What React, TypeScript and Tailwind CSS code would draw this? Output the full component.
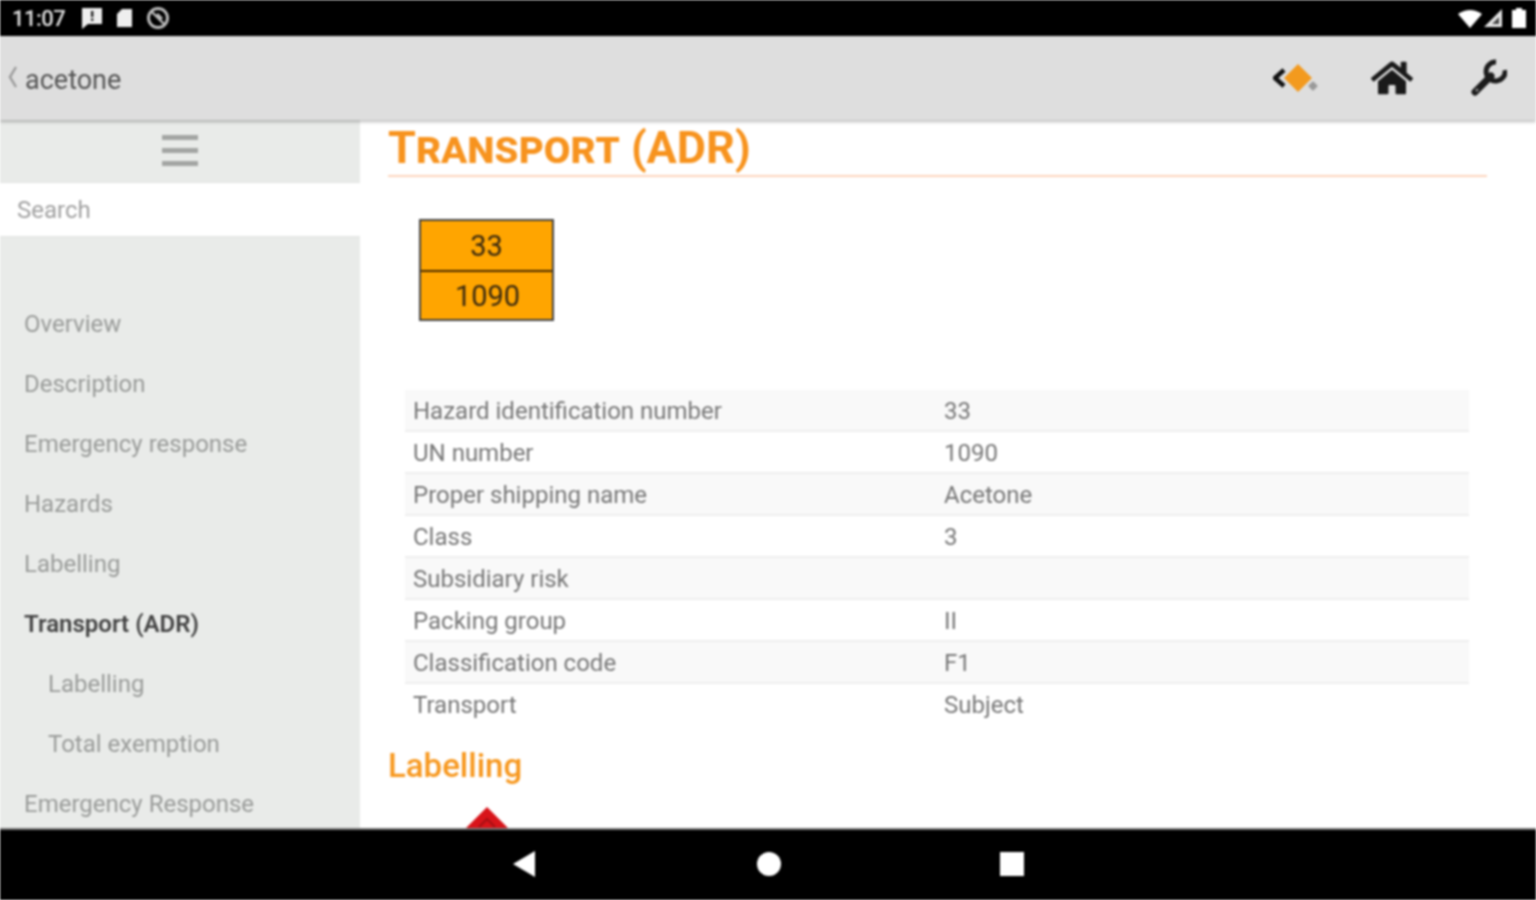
import React from "react";
import { FaHome } from "react-icons/fa";

const nav: { label: string; active?: boolean; sub?: boolean }[] = [
  { label: "Overview" },
  { label: "Description" },
  { label: "Emergency response" },
  { label: "Hazards" },
  { label: "Labelling" },
  { label: "Transport (ADR)", active: true },
  { label: "Labelling", sub: true },
  { label: "Total exemption", sub: true },
  { label: "Emergency Response" },
];

const rows: [string, string][] = [
  ["Hazard identification number", "33"],
  ["UN number", "1090"],
  ["Proper shipping name", "Acetone"],
  ["Class", "3"],
  ["Subsidiary risk", ""],
  ["Packing group", "II"],
  ["Classification code", "F1"],
  ["Transport", "Subject"],
];

function StatusBar() {
  return (
    <div className="h-9 shrink-0 bg-black flex items-center justify-between pl-3 pr-[10px]">
      <div className="flex items-center">
        <span className="text-[22px] font-medium text-[#e0e0e0] tracking-[-0.5px] w-[66px]">11:07</span>
        <svg width="24" height="24" viewBox="0 0 24 24" className="ml-[2px]">
          <path d="M2 2h20v16H8l-6 5z" fill="#eee" />
          <rect x="11" y="5" width="2.4" height="6" fill="#222" />
          <rect x="11" y="12.5" width="2.4" height="2.4" fill="#222" />
        </svg>
        <svg width="18" height="22" viewBox="0 0 18 22" className="ml-[12px]">
          <path d="M6 2h10v18H1V7z" fill="#eee" />
        </svg>
        <svg width="26" height="26" viewBox="0 0 26 26" className="ml-[11px]">
          <circle cx="13" cy="13" r="9.5" fill="none" stroke="#bbb" strokeWidth="3" />
          <path d="M6 6l14 14" stroke="#bbb" strokeWidth="2.4" />
          <path d="M13 8l5 5-3 3-5-5z" fill="#bbb" />
        </svg>
      </div>
      <div className="flex items-center">
        <svg width="24" height="20" viewBox="0 0 24 20" className="mt-[2px]">
          <path d="M0 5Q12-3 24 5L12 19z" fill="#fff" />
        </svg>
        <svg width="20" height="20" viewBox="0 0 20 20" className="ml-[1px]">
          <path d="M19 1v18H1z" fill="#e4e4e4" />
          <path d="M16 9v7H9z" fill="#444" />
        </svg>
        <svg width="14" height="20" viewBox="0 0 14 20" className="ml-[9px]">
          <path d="M4 0h6v2h4v18H0V2h4z" fill="#fff" />
        </svg>
      </div>
    </div>
  );
}

function Header() {
  return (
    <div className="relative z-10 h-[84px] shrink-0 bg-[#dedede] shadow-[0_2px_3px_rgba(0,0,0,0.25)] flex items-center justify-between pl-[7px] pr-[29px]">
      <div className="flex items-center">
        <svg width="11" height="24" viewBox="0 0 11 24" className="mb-[2px]">
          <path d="M9 2L3 12l6 10" fill="none" stroke="#999" strokeWidth="2.4" />
        </svg>
        <span className="ml-[7px] mt-[5px] text-[27px] text-[#555] leading-none">acetone</span>
      </div>
      <div className="flex items-center">
        <svg width="46" height="34" viewBox="0 0 46 34">
          <path d="M11 9l-9 8 9 8" fill="none" stroke="#111" strokeWidth="4.5" />
          <path d="M25 3l14 14-14 14L11 17z" fill="#f39a1e" />
          <rect x="36.5" y="21.5" width="7" height="7" rx="1" transform="rotate(45 40 25)" fill="#9a9a9a" />
        </svg>
        <FaHome className="ml-[52px] text-[#1a1a1a]" size={42} />
        <svg width="36" height="38" viewBox="0 0 36 38" className="ml-[58px]">
          <path d="M4 33L20 17" stroke="#1c1c1c" strokeWidth="7" strokeLinecap="round" />
          <path d="M25 3A9.5 9.5 0 1 0 34 11" fill="none" stroke="#1c1c1c" strokeWidth="5" />
          <circle cx="6" cy="31" r="1.6" fill="#8a8a8a" />
        </svg>
      </div>
    </div>
  );
}

function Sidebar() {
  return (
    <div className="w-[360px] shrink-0 bg-[#e9ebe9] flex flex-col">
      <div className="h-[63px] shrink-0 flex flex-col items-center justify-center gap-2 pb-[3px]">
        <div className="w-9 h-[5px] bg-[#a3a5a3]" />
        <div className="w-9 h-[5px] bg-[#a3a5a3]" />
        <div className="w-9 h-[5px] bg-[#a3a5a3]" />
      </div>
      <div className="h-[53px] shrink-0 w-[361px] bg-white shadow-[0_0_2px_rgba(0,0,0,0.08)] flex items-center pl-[17px] text-[24px] text-[#a0a0a0]">
        Search
      </div>
      <div className="pt-[58px] flex flex-col">
        {nav.map((n, i) => (
          <div
            key={i}
            className={`h-[60px] shrink-0 flex items-center text-[24px] whitespace-nowrap ${n.sub ? "pl-[48px]" : "pl-[24px]"} ${n.active ? "font-semibold text-[#444]" : "text-[#999b99]"}`}
          >
            {n.label}
          </div>
        ))}
      </div>
    </div>
  );
}

function Main() {
  return (
    <div className="flex-1 bg-white pl-[28px] pr-[49px] overflow-hidden min-w-0">
      <h1 className="h-[57px] border-b-2 border-[#fdd5bc] pt-[2px] text-[45px] leading-[52px] font-bold text-[#f7931e] whitespace-nowrap [font-variant:small-caps]">
        Transport (ADR)
      </h1>
      <div className="ml-[31px] mt-[42px] w-[135px] h-[102px] bg-[#ffa500] border-2 border-[#444] flex flex-col">
        <div className="h-[51px] pt-[2px] border-b-2 border-[#4a2c00] flex items-center justify-center text-[29px] text-[#3a2a10]">33</div>
        <div className="flex-1 pt-[2px] pl-[2px] flex items-center justify-center text-[29px] text-[#3a2a10]">1090</div>
      </div>
      <div className="mt-[69px] ml-[17px] mr-[18px]">
        {rows.map(([k, v], i) => (
          <div
            key={k}
            className={`h-[42px] flex items-center border-b-2 pl-2 pt-[1px] text-[24px] text-[#777] ${i % 2 === 0 ? "bg-[#f9f9f9]" : "bg-white"} ${i === rows.length - 1 ? "border-transparent" : "border-[#eeeeee]"}`}
          >
            <div className="w-[531px] shrink-0">{k}</div>
            <div>{v}</div>
          </div>
        ))}
      </div>
      <h2 className="mt-[20px] text-[33px] leading-[40px] font-medium text-[#f7981f]">Labelling</h2>
      <svg width="42" height="22" viewBox="0 0 42 22" className="ml-[78px] mt-[21px] block">
        <path d="M21 0L42 21H0z" fill="#d8141a" />
        <path d="M13 20l8-8 8 8" fill="none" stroke="#a51014" strokeWidth="2" />
      </svg>
    </div>
  );
}

function BottomNav() {
  return (
    <div className="relative z-10 h-[72px] shrink-0 bg-black border-t-2 border-[#777] box-border flex items-center pb-[2px]">
      <svg width="24" height="28" viewBox="0 0 24 28" className="ml-[512px]">
        <path d="M23 1v26L1 14z" fill="#fff" />
      </svg>
      <div className="ml-[221px] w-6 h-6 rounded-full bg-white" />
      <div className="ml-[219px] w-6 h-6 bg-white" />
    </div>
  );
}

export default function App() {
  return (
    <div
      className="w-[1536px] h-[900px] flex flex-col overflow-hidden bg-white blur-[1px]"
      style={{ fontFamily: "Roboto, 'Noto Sans', sans-serif" }}
    >
      <StatusBar />
      <Header />
      <div className="flex-1 flex min-h-0 overflow-hidden">
        <Sidebar />
        <Main />
      </div>
      <BottomNav />
    </div>
  );
}
